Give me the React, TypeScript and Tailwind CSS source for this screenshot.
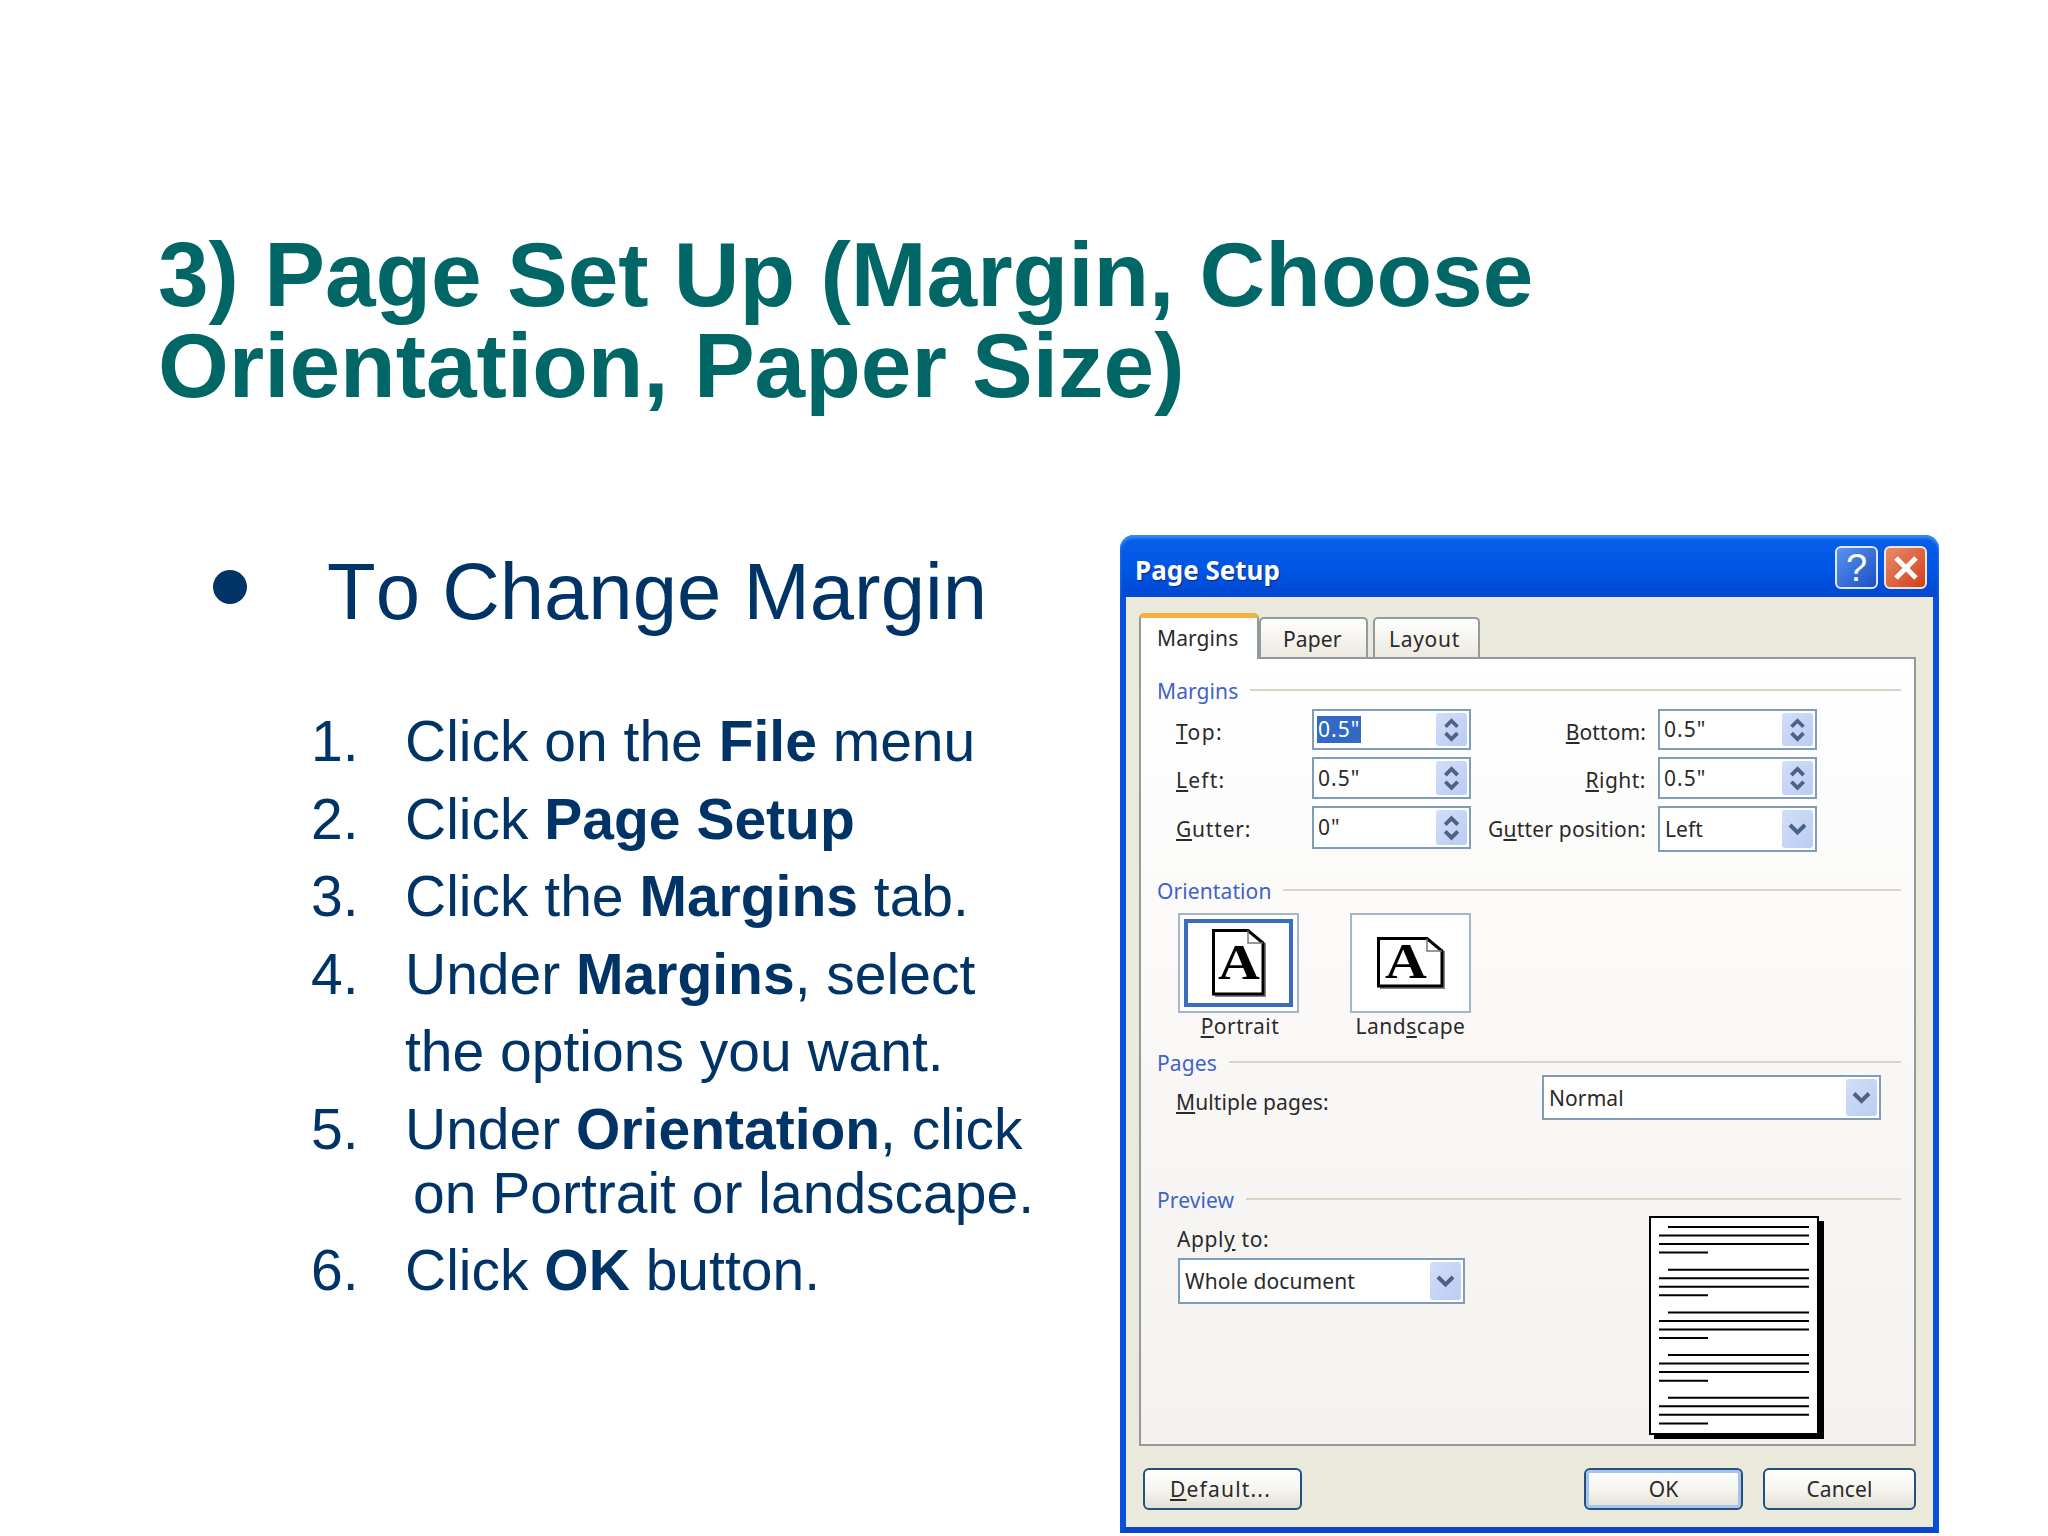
import React from 'react';

const steps: { n: string; lines: React.ReactNode }[] = [
  { n: '1.', lines: <>Click on the <b>File</b> menu</> },
  { n: '2.', lines: <>Click <b>Page Setup</b></> },
  { n: '3.', lines: <>Click the <b>Margins</b> tab.</> },
  { n: '4.', lines: <>Under <b>Margins</b>, select<br />the options you want.</> },
];

function SpinButton() {
  return (
    <div className="my-[2px] mr-[2px] w-[31px] shrink-0 rounded-[3px] bg-gradient-to-br from-[#d3def8] to-[#b9ccf3]">
      <svg viewBox="0 0 31 36" className="h-full w-full" fill="none" stroke="#4d6185" strokeWidth="4">
        <polyline points="9,15 15.5,8.5 22,15" />
        <polyline points="9,22 15.5,28.5 22,22" />
      </svg>
    </div>
  );
}

function ComboButton() {
  return (
    <div className="my-[2px] mr-[2px] w-[31px] shrink-0 rounded-[3px] bg-gradient-to-br from-[#d3def8] to-[#b9ccf3]">
      <svg viewBox="0 0 31 36" className="h-full w-full" fill="none" stroke="#4d6185" strokeWidth="4">
        <polyline points="8,14 15.5,21.5 23,14" />
      </svg>
    </div>
  );
}

function SpinBox({ value, selected, h = 'h-[42px]' }: { value: string; selected?: boolean; h?: string }) {
  return (
    <div className={`flex w-[159px] justify-between border-2 border-[#7f9db9] bg-white ${h}`}>
      <span className="flex items-center pl-[3px]">
        <span className={`px-px leading-[27px] tracking-[1px] ${selected ? 'bg-[#316ac5] text-white' : ''}`}>{value}</span>
      </span>
      <SpinButton />
    </div>
  );
}

function Combo({ value, w, h }: { value: string; w: string; h: string }) {
  return (
    <div className={`flex justify-between border-2 border-[#7f9db9] bg-white ${w} ${h}`}>
      <span className="flex items-center pl-[5px]">{value}</span>
      <ComboButton />
    </div>
  );
}

function SectionHead({ title, h = 'h-[26px]' }: { title: string; h?: string }) {
  return (
    <div className={`flex items-center gap-[12px] text-[#3f62c9] ${h}`}>
      <span>{title}</span>
      <div className="-mt-[3px] h-[2px] flex-1 bg-[#d6d5c8]" />
    </div>
  );
}

function PageIcon({ landscape }: { landscape?: boolean }) {
  const w = landscape ? 68 : 54;
  const h = landscape ? 52 : 68;
  return (
    <svg width={w} height={h} viewBox={`0 0 ${w} ${h}`} className="overflow-visible">
      <path d={`M${w - 1} 14 V${h - 1} H3`} fill="none" stroke="#888" strokeWidth="2" />
      <path
        d={`M1.5 1.5 H${w - 18} L${w - 3} 14 V${h - 3} H1.5 Z`}
        fill="white"
        stroke="black"
        strokeWidth="3"
      />
      <path d={`M${w - 18} 1.5 V14 H${w - 3}`} fill="none" stroke="#777" strokeWidth="1.5" />
      <text
        x={landscape ? 8 : 6}
        y={landscape ? 41 : 50}
        textLength="42"
        lengthAdjust="spacingAndGlyphs"
        fontFamily="'Liberation Serif', serif"
        fontWeight="bold"
        fontSize="50"
        fill="black"
      >
        A
      </text>
    </svg>
  );
}

function PreviewPage() {
  const paragraphs = [0, 1, 2, 3, 4];
  return (
    <svg width="176" height="224" viewBox="0 0 176 224" className="mt-[3px] shrink-0">
      <rect x="5" y="5" width="170" height="218" fill="black" />
      <rect x="1" y="1" width="168" height="217" fill="white" stroke="black" strokeWidth="2" />
      {paragraphs.map((p) => {
        const y = 11 + p * 42.7;
        return (
          <g key={p} stroke="black" strokeWidth="2">
            <line x1="19" x2="160" y1={y} y2={y} />
            <line x1="10" x2="160" y1={y + 8.5} y2={y + 8.5} />
            <line x1="10" x2="160" y1={y + 17} y2={y + 17} />
            <line x1="10" x2="59" y1={y + 25.6} y2={y + 25.6} />
          </g>
        );
      })}
    </svg>
  );
}

function DialogButton({ children, w, isDefault }: { children: React.ReactNode; w: string; isDefault?: boolean }) {
  return (
    <div
      className={`flex h-[42px] items-center justify-center rounded-[6px] border-2 border-[#22517f] bg-gradient-to-b from-white via-[#f6f5f0] to-[#e2dfd4] ${w} ${
        isDefault ? 'shadow-[inset_0_0_0_3px_#a9c3ee]' : ''
      }`}
    >
      {children}
    </div>
  );
}

function PageSetupDialog() {
  return (
    <div
      className="flex h-[998px] w-[819px] shrink-0 flex-col text-[21px] leading-[26px] tracking-[0.1px] text-[#2a2a2a]"
      style={{ fontFamily: "'Noto Sans', sans-serif" }}
    >
      {/* title bar */}
      <div className="flex h-[62px] items-center justify-between rounded-t-[14px] bg-gradient-to-b from-[#0a5fe8] via-[#0157e6] to-[#0147d3] pl-[15px] pr-[12px] shadow-[inset_0_3px_3px_#3a8cf5]">
        <span className="pt-[7px] text-[26px] font-bold tracking-normal text-white [text-shadow:1px_1px_1px_#0a2a80]">Page Setup</span>
        <div className="flex gap-[6px] pt-[3px]">
          <div className="flex h-[43px] w-[43px] items-center justify-center rounded-[6px] border-2 border-[#dfe9fb] bg-gradient-to-br from-[#5a92f0] to-[#1c4fc4] text-[38px] text-white" style={{ fontFamily: "'Liberation Sans', sans-serif" }}>
            ?
          </div>
          <div className="flex h-[43px] w-[43px] items-center justify-center rounded-[6px] border-2 border-[#f0e4df] bg-gradient-to-br from-[#e98a68] to-[#cf3c10]">
            <svg width="24" height="24" viewBox="0 0 24 24" stroke="white" strokeWidth="5">
              <line x1="2" y1="2" x2="22" y2="22" />
              <line x1="22" y1="2" x2="2" y2="22" />
            </svg>
          </div>
        </div>
      </div>

      {/* window body */}
      <div className="flex flex-1 flex-col border-x-[6px] border-b-[6px] border-x-[#0a50dc] border-b-[#0a46cc] bg-[#ebe8dc] pl-[13px] pr-[17px] pt-[16px]">
        <div className="flex h-[44px] items-end">
          <div className="relative z-10 -mb-[2px] h-[46px] w-[120px] rounded-t-[5px] border-t-[5px] border-x-2 border-t-[#f6b03f] border-x-[#919b9c] bg-white pl-[16px] pt-[7px]">
            Margins
          </div>
          <div className="h-[40px] w-[109px] rounded-t-[5px] border-2 border-b-0 border-[#919b9c] bg-gradient-to-b from-white to-[#ece9e0] pl-[22px] pt-[7px]">
            Paper
          </div>
          <div className="ml-[5px] h-[40px] w-[107px] rounded-t-[5px] border-2 border-b-0 border-[#919b9c] bg-gradient-to-b from-white to-[#ece9e0] pl-[14px] pt-[7px] tracking-[0.7px]">
            Layout
          </div>
        </div>

        {/* panel */}
        <div className="flex h-[789px] flex-col border-2 border-[#919b9c] bg-gradient-to-b from-white to-[#f4f1ee] pl-[16px] pr-[13px] pt-[19px]">
          <SectionHead title="Margins" />
          <div className="mt-[5px] flex flex-col gap-[7px] pl-[19px]">
            <div className="flex h-[41px] items-start">
              <span className="mt-[10px] w-[136px] tracking-[1.4px]"><u>T</u>op:</span>
              <SpinBox value={'0.5"'} selected h="h-[41px]" />
              <span className="mt-[10px] w-[175px] text-right"><u>B</u>ottom:</span>
              <span className="w-[12px]" />
              <SpinBox value={'0.5"'} h="h-[41px]" />
            </div>
            <div className="flex h-[42px] items-start">
              <span className="mt-[10px] w-[136px] tracking-[1.2px]"><u>L</u>eft:</span>
              <SpinBox value={'0.5"'} />
              <span className="mt-[10px] w-[175px] text-right tracking-[0.5px]"><u>R</u>ight:</span>
              <span className="w-[12px]" />
              <SpinBox value={'0.5"'} />
            </div>
            <div className="flex h-[46px] items-start">
              <span className="mt-[10px] w-[136px] tracking-[0.8px]"><u>G</u>utter:</span>
              <SpinBox value={'0"'} h="h-[43px]" />
              <span className="mt-[10px] w-[175px] whitespace-nowrap text-right tracking-[0.2px]">G<u>u</u>tter position:</span>
              <span className="w-[12px]" />
              <Combo value="Left" w="w-[159px]" h="h-[46px]" />
            </div>
          </div>

          <div className="mt-[26px]">
            <SectionHead title="Orientation" />
          </div>
          <div className="ml-[21px] mt-[9px] flex gap-[51px]">
            <div className="w-[121px] text-center">
              <div className="h-[100px] border-2 border-[#a3b6cc] bg-white p-[4px]">
                <div className="flex h-full items-center justify-center border-[4px] border-[#3a6cc0]">
                  <PageIcon />
                </div>
              </div>
              <span className="pl-[3px] tracking-[0.5px]"><u>P</u>ortrait</span>
            </div>
            <div className="w-[121px] text-center">
              <div className="flex h-[100px] items-center justify-center border-2 border-[#a3b6cc] bg-white">
                <PageIcon landscape />
              </div>
              <span className="whitespace-nowrap tracking-[0.5px]">Land<u>s</u>cape</span>
            </div>
          </div>

          <div className="mt-[12px]">
            <SectionHead title="Pages" h="h-[24px]" />
          </div>
          <div className="flex pl-[19px]">
            <span className="mt-[14px] w-[366px]"><u>M</u>ultiple pages:</span>
            <Combo value="Normal" w="w-[339px]" h="h-[45px]" />
          </div>

          <div className="mt-[67px]">
            <SectionHead title="Preview" />
          </div>
          <div className="flex">
            <div className="w-[492px] pl-[20px] pt-[13px]">
              <div className="tracking-[0.6px]">Appl<u>y</u> to:</div>
              <div className="ml-px mt-[6px]">
                <Combo value="Whole document" w="w-[287px]" h="h-[46px]" />
              </div>
            </div>
            <PreviewPage />
          </div>
        </div>

        {/* dialog buttons */}
        <div className="mt-[22px] flex pl-[4px]">
          <DialogButton w="w-[160px]"><span className="-ml-[4px] tracking-[1.2px]"><u>D</u>efault...</span></DialogButton>
          <div className="ml-[282px] flex gap-[20px]">
            <DialogButton w="w-[159px]" isDefault>OK</DialogButton>
            <DialogButton w="w-[153px]">Cancel</DialogButton>
          </div>
        </div>
      </div>
    </div>
  );
}

export default function App() {
  return (
    <div
      className="h-[1536px] w-[2048px] overflow-hidden bg-white pl-[158px] pt-[229px]"
      style={{ fontFamily: "'Liberation Sans', Arial, sans-serif" }}
    >
      <h1 className="text-[91px] font-bold leading-[91px] text-[#006666]">
        3) Page Set Up (Margin, Choose
        <br />
        Orientation, Paper Size)
      </h1>

      <div className="mt-[124px] flex">
        <div className="w-[962px] pt-[13px] text-[#003366]">
          <div className="flex h-[88px] items-center pl-[55px] text-[79.7px] leading-[88px] [font-kerning:none]">
            <span className="mb-[10px] mr-[80px] h-[34px] w-[34px] rounded-full bg-[#003366]" />
            To Change Margin
          </div>
          <div className="mt-[67px] text-[57px] leading-[77.6px]">
            {steps.map((s) => (
              <div key={s.n} className="flex pl-[153px]">
                <span className="w-[94px] shrink-0">{s.n}</span>
                <span>{s.lines}</span>
              </div>
            ))}
            <div className="flex pl-[153px]">
              <span className="w-[94px] shrink-0">5.</span>
              <span>
                Under <b>Orientation</b>, click
              </span>
            </div>
            <div className="-mt-[14px] pl-[255px]">on Portrait or landscape.</div>
            <div className="flex pl-[153px]">
              <span className="w-[94px] shrink-0">6.</span>
              <span>
                Click <b>OK</b> button.
              </span>
            </div>
          </div>
        </div>
        <PageSetupDialog />
      </div>
    </div>
  );
}
